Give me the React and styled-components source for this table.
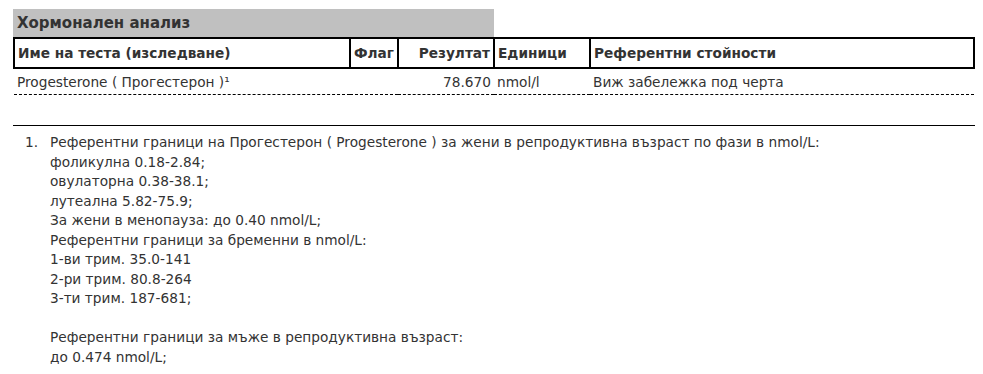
import React from 'react';
import styled, { createGlobalStyle } from 'styled-components';

let GlobalStyle = createGlobalStyle`
    body {
        margin: 0;
        background: #fff;
        color: #333;
        font-family: "DejaVu Sans", Verdana, sans-serif;
        font-size: 13.7px;
    }
`

let footnote = [
    'Референтни граници на Прогестерон ( Progesterone ) за жени в репродуктивна възраст по фази в nmol/L:',
    'фоликулна 0.18-2.84;',
    'овулаторна 0.38-38.1;',
    'лутеална 5.82-75.9;',
    'За жени в менопауза: до 0.40 nmol/L;',
    'Референтни граници за бременни в nmol/L:',
    '1-ви трим. 35.0-141',
    '2-ри трим. 80.8-264',
    '3-ти трим. 187-681;',
    '',
    'Референтни граници за мъже в репродуктивна възраст:',
    'до 0.474 nmol/L;'
]

let App = () => {
    return (
        <Page>
            <GlobalStyle />
            <Title>Хормонален анализ</Title>
            <Table>
                <colgroup>
                    <col width="336" />
                    <col width="48" />
                    <col width="96" />
                    <col width="96" />
                    <col width="384" />
                </colgroup>
                <thead>
                    <tr>
                        <Th>Име на теста (изследване)</Th>
                        <Th>Флаг</Th>
                        <Th right>Резултат</Th>
                        <Th>Единици</Th>
                        <Th>Референтни стойности</Th>
                    </tr>
                </thead>
                <tbody>
                    <tr>
                        <Td>Progesterone ( Прогестерон )¹</Td>
                        <Td></Td>
                        <Td right>78.670</Td>
                        <Td>nmol/l</Td>
                        <Td>Виж забележка под черта</Td>
                    </tr>
                </tbody>
            </Table>
            <Notes>
                <Note>
                    <Num>1.</Num>
                    <NoteText>
                        {footnote.map((line, index) => <Line key={index}>{line || '\u00a0'}</Line>)}
                    </NoteText>
                </Note>
            </Notes>
        </Page>
    )
}

let Page = styled.div`
    width: 962px;
    padding: 9px 0 0 13px;
`

let Title = styled.div`
    width: 477px;
    height: 28px;
    padding-left: 4px;
    background: #c0c0c0;
    font-size: 15px;
    font-weight: bold;
    line-height: 28px;
`

let Table = styled.table`
    width: 962px;
    border-collapse: collapse;
    table-layout: fixed;
`

let Th = styled.th`
    height: 28px;
    padding: 0 3px;
    border: 2px solid #000;
    font-weight: bold;
    text-align: ${({right}) => right ? 'right' : 'left'};
    white-space: nowrap;
`

let Td = styled.td`
    height: 25px;
    padding: 0 3px;
    border-bottom: 1px dashed #000;
    text-align: ${({right}) => right ? 'right' : 'left'};
    white-space: nowrap;
`

let Notes = styled.div`
    margin-top: 30px;
    padding-top: 7px;
    border-top: 1px solid #000;
`

let Note = styled.div`
    display: flex;
    flex-direction: row;
    line-height: 19.5px;
`

let Num = styled.span`
    width: 25px;
    padding-left: 12px;
`

let NoteText = styled.div`
    display: flex;
    flex-direction: column;
`

let Line = styled.span`
    white-space: nowrap;
`

export default App;
